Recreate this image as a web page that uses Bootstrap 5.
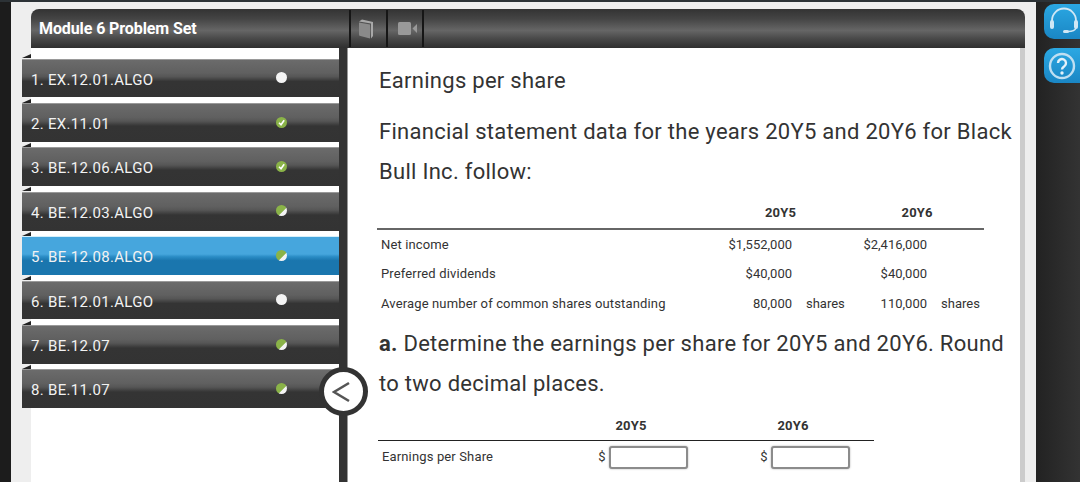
<!DOCTYPE html>
<html lang="en"><head><meta charset="utf-8"><title>Module 6 Problem Set</title>
<link href="https://cdn.jsdelivr.net/npm/bootstrap@5.3.0/dist/css/bootstrap.min.css" rel="stylesheet">
<style>
html,body{width:1080px;height:482px;overflow:hidden;margin:0;background:#eee;font-family:Roboto,"Liberation Sans",sans-serif;color:#333}
.shell{height:482px;border-top:2px solid #2c3236}
.edge-left{width:11px;background:#1c1c1c;flex:none}
.edge-right{width:44px;flex:none;background:linear-gradient(90deg,#222 0,#333 100%);padding:2px 0 0 8px}
.stage{width:1025px;flex:none;padding:7px 11px 0 20px}
.hdr{height:39px;border-radius:8px 8px 0 0;background:linear-gradient(180deg,#333 0,#444 25%,#666 55%,#4a4a4a 75%,#2f2f2f 100%);color:#fff}
.hdr-title{width:318px;padding-left:8px;font-weight:700;font-size:16px;letter-spacing:-.1px}
.tool{height:37px;width:36.500px;border-left:2px solid #161616;display:flex;align-items:center;justify-content:center}
.tool-book svg{margin-right:5px}
.tool-cam svg{margin-left:5px}
.tool-end{width:2px;height:37px;background:#161616}
.workspace{height:440px;position:relative}
.side{width:308px;flex:none;padding-top:10.7px;background:#fff}
.prob{width:317px;margin-left:-9px;height:38.8px;margin-bottom:5.6px;padding-left:9px;position:relative;font-size:15px;letter-spacing:.3px;line-height:41px;color:#f2f2f2;background:linear-gradient(180deg,#6b6b6b 0,#606060 35%,#565656 45%,#343434 58%,#333 100%);border-top:1px solid #999}
.prob::before{content:"";position:absolute;left:0;top:-5.5px;border-style:solid;border-width:0 0 4.5px 9px;border-color:transparent transparent #222 transparent}
.prob.now{background:linear-gradient(180deg,#46a6dd 0,#46a6dd 45%,#2a8cc5 52%,#1a76ae 62%,#1a76ae 100%);border-top:1px solid #d5effa}
.dot{position:absolute;left:253.5px;top:12.500px;width:11px;height:11px;border-radius:50%;background:#f4f4f4}
.dot.full{background:#8ab348}
.dot.half{background:linear-gradient(135deg,#8ab348 0,#8ab348 58%,#f4f4f4 62%,#f4f4f4 100%)}
.dot svg{display:block}
.splitter{width:9px;flex:none;background:#333;border-right:1px solid #999}
.sheet{width:672px;flex:none;background:#fff;padding:13px 8px 0 31px;font-size:22px;letter-spacing:.28px;line-height:40px;overflow:hidden}
.rim{width:5px;flex:none;background:#ccc}
.sheet p{margin:0}
.gap-line{margin-top:11px!important}
.datatbl{border-collapse:collapse;table-layout:fixed;font-size:13px;letter-spacing:.14px;line-height:16px;margin-left:-2px;color:#333}
.t1{width:607px;margin-top:5px;margin-bottom:5px}
.t2{width:496px;margin-top:8px;margin-left:-1px}
.datatbl th{font-weight:700;text-align:center;vertical-align:middle;padding:0}
.t1 th{height:32px;border-bottom:2px solid #666}
.t1 th.nudge{padding-right:6px}
.datatbl td{padding:0;height:29.5px;vertical-align:middle}
.t1 tr.lead-row td{height:30.5px;padding-top:1px}
.t1 td:first-child,.t2 td:first-child{padding-left:4px}
.amt{text-align:right;padding-right:6px!important;letter-spacing:0}
.unit{padding-left:8px!important;letter-spacing:0}
.fill{white-space:nowrap;text-align:center;padding-left:24px!important}
.t2 td{height:32px;padding-top:1px}
.t2 th{height:29px;border-bottom:1px solid #222}
.box{display:inline-block;width:79px;height:23px;vertical-align:middle;margin-left:3px;border:2px solid #8c8c8c;border-radius:3px;background:#fff;box-shadow:0 0 2px #aaa}
.fold{position:absolute;left:288px;top:319px;width:49px;height:49px;border-radius:50%;background:#fff;border:5px solid #333;display:flex;align-items:center;justify-content:center}
.fold svg{margin-right:5px}
.hlp{width:36px;height:35px;border-radius:10px 0 0 10px;background:linear-gradient(180deg,#2ba8e3 0,#1a86c4 100%);margin-bottom:9px;display:flex;align-items:center;justify-content:center}
</style></head>
<body>
<div class="shell d-flex">
  <div class="edge-left"></div>
  <div class="stage">
    <div class="hdr d-flex align-items-center">
      <div class="hdr-title">Module 6 Problem Set</div>
      <div class="tool tool-book"><svg width="16" height="20" viewBox="0 0 16 20"><path d="M1 2.500 4 .5l11 2.500v14l-2 2.500V4.500L1 2.500z" fill="#a8a8a8"/><path d="M1 3.500l11 2v14l-9.500-2.500Q1 17 1 15.500z" fill="#8a8a8a"/></svg></div>
      <div class="tool tool-cam"><svg width="19" height="13" viewBox="0 0 19 13"><rect width="13" height="13" rx="1.500" fill="#999"/><path d="M14.500 6.500 19 2v9z" fill="#999"/></svg></div>
      <div class="tool-end"></div>
    </div>
    <div class="workspace d-flex">
      <div class="side">
        <div class="prob">1. EX.12.01.ALGO<span class="dot"></span></div>
        <div class="prob">2. EX.11.01<span class="dot full"><svg width="11" height="11" viewBox="0 0 11 11"><path d="M3 5.800 5 7.800 8.200 3.200" fill="none" stroke="#fff" stroke-width="1.600"/></svg></span></div>
        <div class="prob">3. BE.12.06.ALGO<span class="dot full"><svg width="11" height="11" viewBox="0 0 11 11"><path d="M3 5.800 5 7.800 8.200 3.200" fill="none" stroke="#fff" stroke-width="1.600"/></svg></span></div>
        <div class="prob">4. BE.12.03.ALGO<span class="dot half"></span></div>
        <div class="prob now">5. BE.12.08.ALGO<span class="dot half"></span></div>
        <div class="prob">6. BE.12.01.ALGO<span class="dot"></span></div>
        <div class="prob">7. BE.12.07<span class="dot half"></span></div>
        <div class="prob">8. BE.11.07<span class="dot half"></span></div>
      </div>
      <div class="splitter"></div>
      <div class="sheet">
        <p>Earnings per share</p>
        <p class="gap-line">Financial statement data for the years 20Y5 and 20Y6 for Black Bull Inc. follow:</p>
        <table class="datatbl t1">
          <colgroup><col style="width:340px"><col style="width:81px"><col style="width:52px"><col style="width:83px"><col style="width:51px"></colgroup>
          <tr><th></th><th colspan="2" class="nudge">20Y5</th><th colspan="2">20Y6</th></tr>
          <tr class="lead-row"><td>Net income</td><td class="amt">$1,552,000</td><td></td><td class="amt">$2,416,000</td><td></td></tr>
          <tr><td>Preferred dividends</td><td class="amt">$40,000</td><td></td><td class="amt">$40,000</td><td></td></tr>
          <tr><td>Average number of common shares outstanding</td><td class="amt">80,000</td><td class="unit">shares</td><td class="amt">110,000</td><td class="unit">shares</td></tr>
        </table>
        <p><strong class="fw-bold">a.</strong> Determine the earnings per share for 20Y5 and 20Y6. Round to two decimal places.</p>
        <table class="datatbl t2">
          <colgroup><col style="width:172px"><col style="width:162px"><col style="width:162px"></colgroup>
          <tr><th></th><th>20Y5</th><th>20Y6</th></tr>
          <tr><td>Earnings per Share</td><td class="fill">$<span class="box"></span></td><td class="fill">$<span class="box"></span></td></tr>
        </table>
      </div>
      <div class="rim"></div>
      <div class="fold"><svg width="18" height="22" viewBox="0 0 18 22"><path d="M17 2 2 11l15 9" fill="none" stroke="#555" stroke-width="2.600"/></svg></div>
    </div>
  </div>
  <div class="edge-right">
    <div class="hlp"><svg width="34" height="30" viewBox="0 0 34 30"><path d="M7 15V13.500a12 12 0 0 1 24 0V15" fill="none" stroke="#cfe7f5" stroke-width="1.800"/><rect x="5" y="13" width="4" height="9" rx="2" fill="#cfe7f5"/><rect x="29" y="13" width="4" height="9" rx="2" fill="#cfe7f5"/><path d="M31 21c-1 3-4 3.500-8 3.500" fill="none" stroke="#cfe7f5" stroke-width="1.400"/><rect x="18" y="23" width="6" height="3" rx="1.500" fill="#cfe7f5"/></svg></div>
    <div class="hlp"><svg width="30" height="30" viewBox="0 0 30 30"><circle cx="15" cy="15" r="12" fill="none" stroke="#bfdff2" stroke-width="2.400"/><path d="M11 12a4 4 0 1 1 6.300 3.300c-1.500 1-2.300 1.700-2.300 3.200" fill="none" stroke="#e4f2fa" stroke-width="2.400"/><circle cx="15" cy="22" r="1.700" fill="#e4f2fa"/></svg></div>
  </div>
</div>
</body></html>
